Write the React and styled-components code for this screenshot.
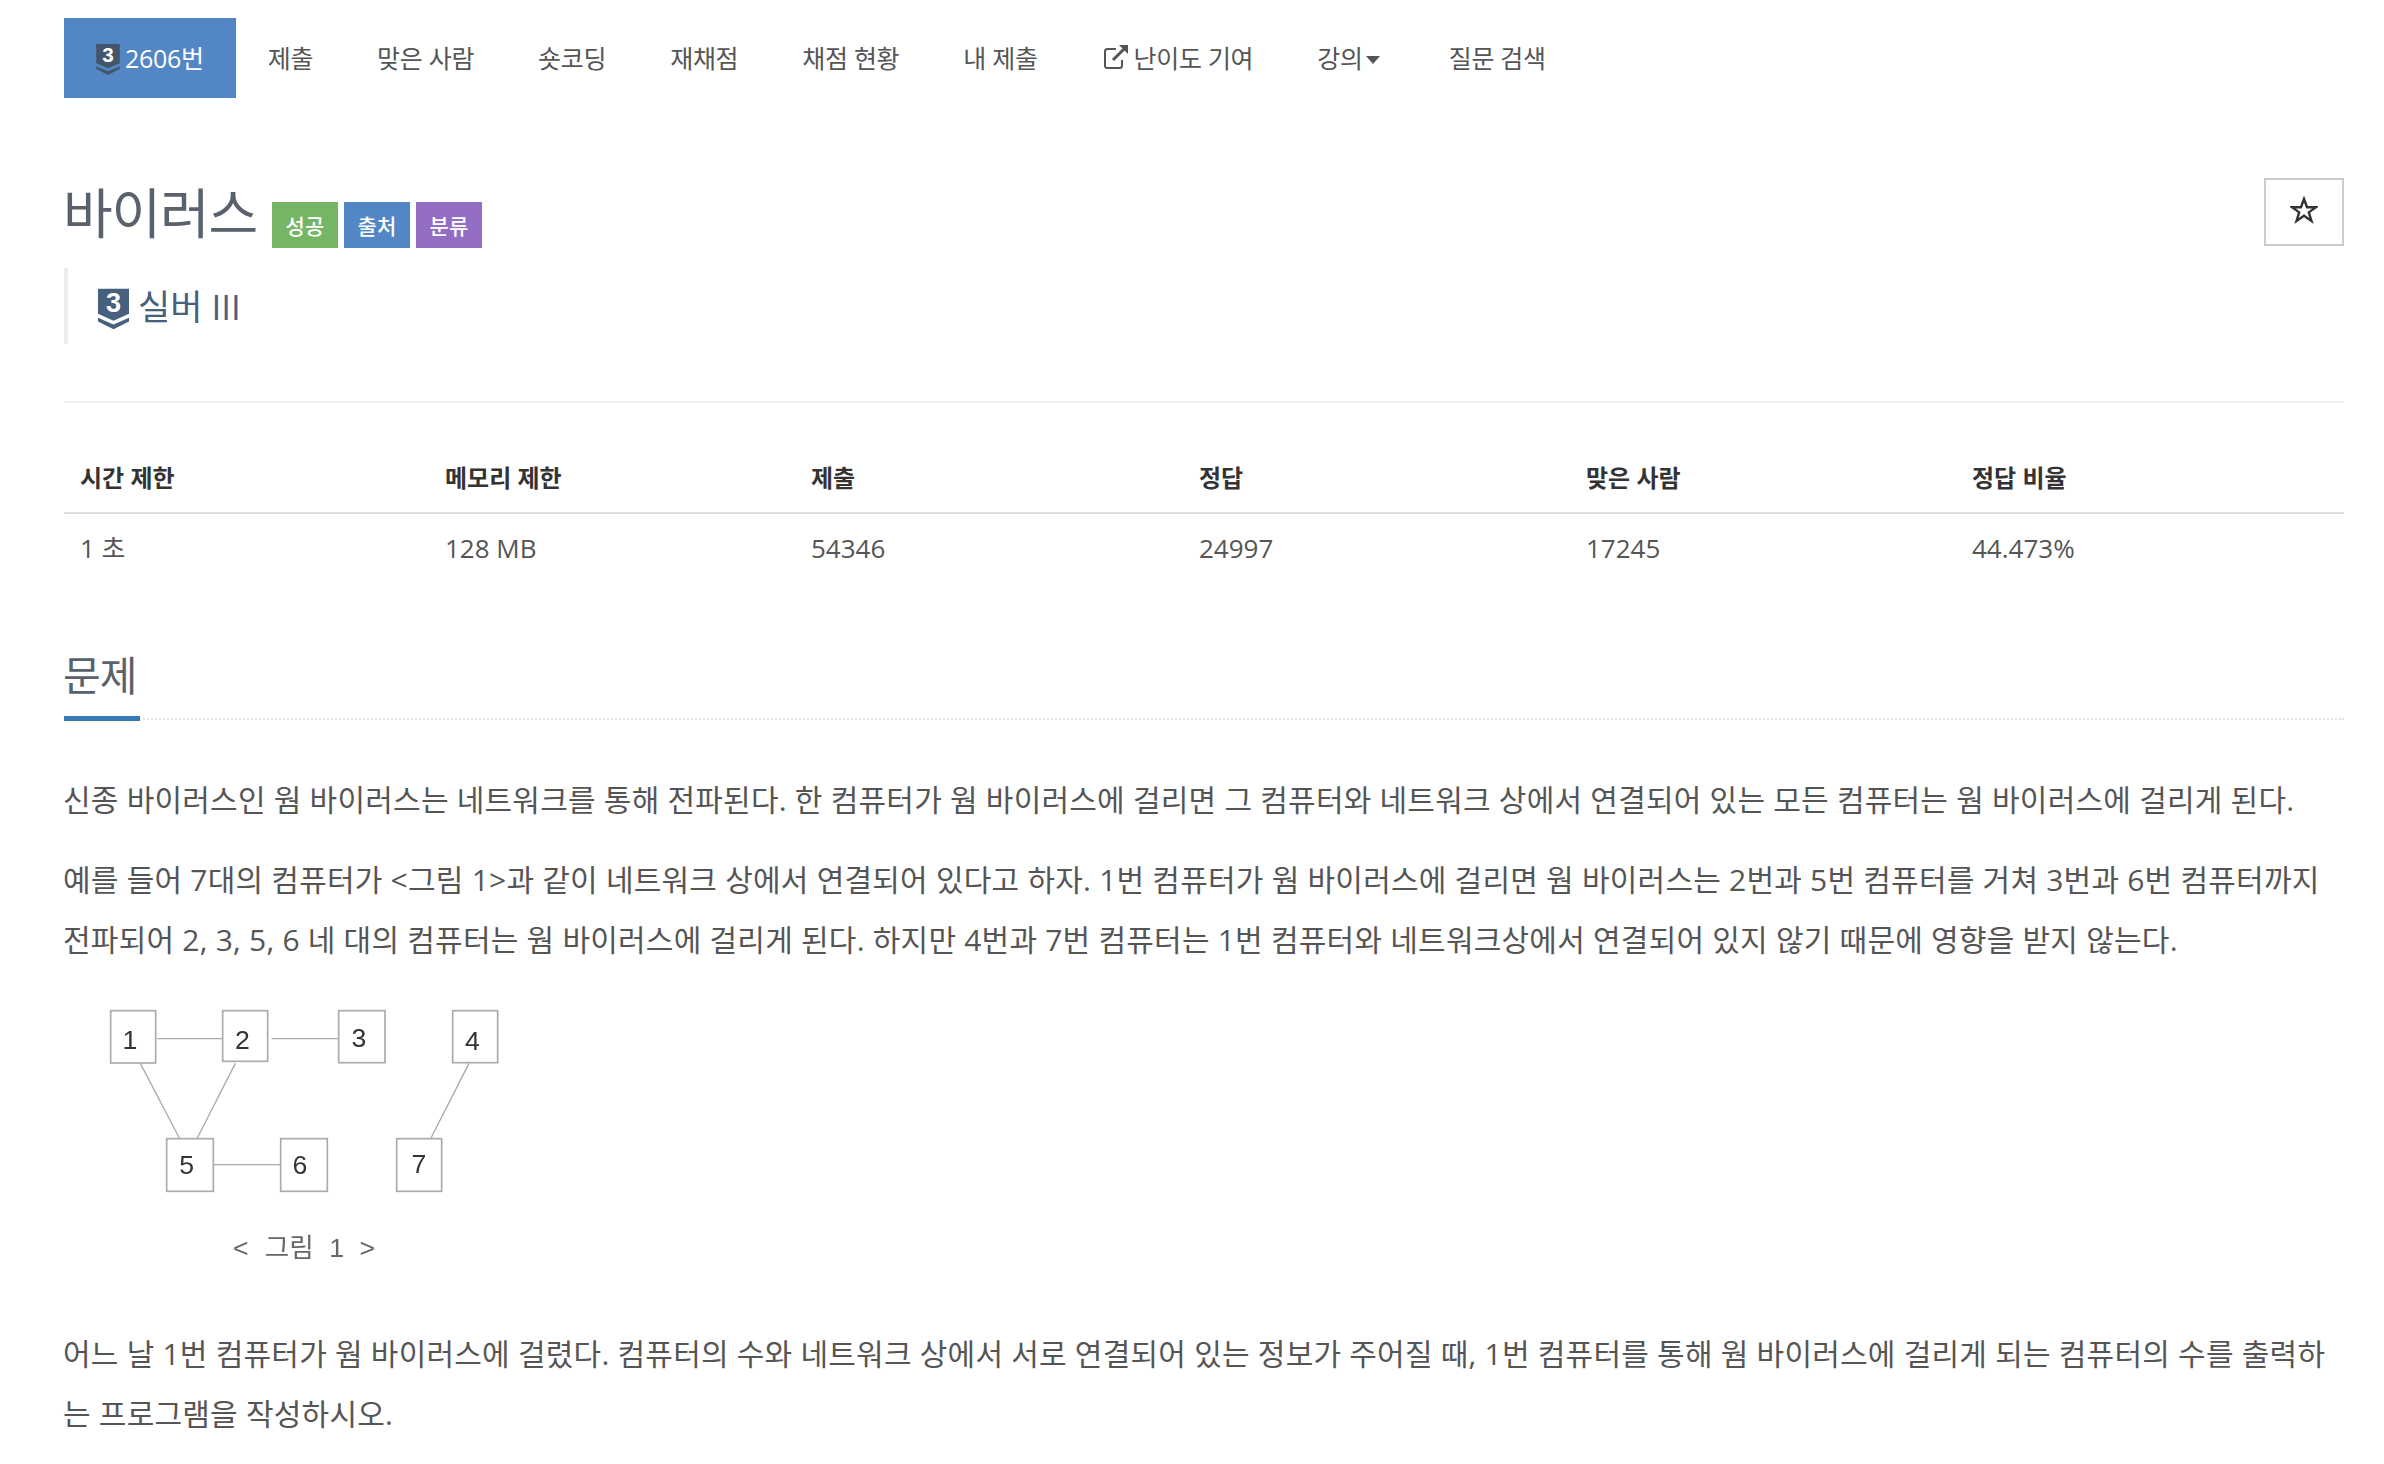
import React from "react";
import styled, { createGlobalStyle } from "styled-components";

const GlobalStyle = createGlobalStyle`
  html, body {
    margin: 0;
    padding: 0;
    background: #fff;
    overflow: hidden;
  }
  body {
    font-family: "Open Sans", "Noto Sans CJK KR", sans-serif;
    color: #555;
  }
`;

const Page = styled.div`
  width: 2384px;
  height: 1464px;
  box-sizing: border-box;
  padding: 18px 40px 0 64px;
  overflow: hidden;
`;

const NavBar = styled.nav`
  display: flex;
  align-items: stretch;
  height: 80px;
`;

const NavItem = styled.a`
  display: flex;
  align-items: center;
  padding: 0 32px 2px;
  font-size: 25px;
  letter-spacing: -0.3px;
  color: ${(props) => (props.$active ? "#fff" : "#555")};
  background: ${(props) => (props.$active ? "#5286c4" : "transparent")};
  white-space: nowrap;
`;

const NavIcon = styled.span`
  display: flex;
  margin-top: ${(props) => props.$top || 0}px;
  margin-right: ${(props) => props.$gap}px;
`;

const Caret = styled.span`
  width: 0;
  height: 0;
  margin: 6px 5px 0 3px;
  border-left: 7px solid transparent;
  border-right: 7px solid transparent;
  border-top: 8px solid #555;
`;

const TitleRow = styled.div`
  display: flex;
  align-items: flex-start;
  justify-content: space-between;
  margin-top: 80px;
`;

const TitleGroup = styled.div`
  display: flex;
  align-items: flex-end;
`;

const Title = styled.h1`
  margin: 0 15px 0 -1px;
  font-size: 54px;
  line-height: 70px;
  font-weight: 400;
  color: #59616c;
  letter-spacing: -1.2px;
`;

const Labels = styled.div`
  display: flex;
  gap: 6px;
`;

const Label = styled.span`
  display: flex;
  align-items: center;
  justify-content: center;
  width: 66px;
  height: 46px;
  font-size: 21px;
  font-weight: 500;
  color: #fff;
  background: ${(props) => props.$color};
`;

const StarButton = styled.button`
  display: flex;
  align-items: center;
  justify-content: center;
  width: 80px;
  height: 68px;
  padding: 0 0 4px;
  background: #fff;
  border: 2px solid #ccc;
`;

const TierQuote = styled.div`
  display: flex;
  align-items: center;
  height: 76px;
  margin: 20px 0 0;
  padding-left: 30px;
  border-left: 4px solid #eee;
`;

const TierIcon = styled.span`
  display: flex;
  margin-top: 6px;
`;

const TierName = styled.span`
  margin: 0 0 3px 9px;
  font-size: 35px;
  color: #46607e;
`;

const Divider = styled.hr`
  margin: 57px 0 0;
  border: 0;
  border-top: 2px solid #f0f0f0;
`;

const StatsTable = styled.div`
  display: grid;
  grid-template-columns: 365px 366px 388px 387px 386px 1fr;
  margin-top: 24px;
`;

const HeadCell = styled.div`
  height: 87px;
  box-sizing: border-box;
  padding: 35px 16px 0;
  font-size: 24px;
  line-height: 32px;
  font-weight: 700;
  color: #333;
  border-bottom: 2px solid #ddd;
`;

const BodyCell = styled.div`
  padding: 17px 16px 0;
  font-size: 26px;
  line-height: 34px;
  color: #555;
`;

const SectionHead = styled.div`
  position: relative;
  height: 75px;
  margin-top: 78px;
  border-bottom: 2px dotted #e4e4e4;
`;

const SectionTitle = styled.h2`
  margin: 0 0 0 -1px;
  font-size: 41px;
  line-height: 64px;
  font-weight: 400;
  color: #59616c;
  letter-spacing: -1px;
`;

const SectionBar = styled.span`
  position: absolute;
  left: 0;
  bottom: -3px;
  width: 76px;
  height: 5px;
  background: #337ab7;
`;

const Body = styled.div`
  margin-top: 50px;
`;

const Para = styled.p`
  margin: 0 0 ${(props) => props.$after || 20}px -1px;
  font-size: 30px;
  line-height: 60px;
  color: #555;
  letter-spacing: 0.22px;
`;

const Figure = styled.svg`
  display: block;
  margin: 0 0 44px 16px;
  filter: blur(0.5px);
`;

const Shield = ({ width, height, color, digit }) => (
  <svg width={width} height={height} viewBox="0 0 32 42">
    <path d="M0 0H32V26L16 33L0 26Z" fill={color} />
    <path d="M0 30L16 37L32 30V34L16 42L0 34Z" fill={color} />
    <text x="16" y="24" textAnchor="middle" fontFamily="'Liberation Sans', sans-serif" fontSize="28" fontWeight="700" fill="#fff">{digit}</text>
  </svg>
);

const boxes = [
  { x: 92, y: 62, w: 135, h: 157, n: "1", tx: 150, ty: 178 },
  { x: 428, y: 62, w: 135, h: 152, n: "2", tx: 487, ty: 176 },
  { x: 776, y: 62, w: 139, h: 156, n: "3", tx: 837, ty: 171 },
  { x: 1118, y: 62, w: 135, h: 156, n: "4", tx: 1177, ty: 180 },
  { x: 260, y: 446, w: 140, h: 158, n: "5", tx: 320, ty: 553 },
  { x: 602, y: 446, w: 140, h: 158, n: "6", tx: 660, ty: 553 },
  { x: 950, y: 446, w: 135, h: 158, n: "7", tx: 1017, ty: 550 },
];

const links = [
  [232, 146, 428, 146],
  [575, 146, 776, 146],
  [181, 220, 298, 444],
  [466, 220, 352, 444],
  [1167, 220, 1050, 450],
  [400, 524, 602, 524],
];

const caption = [
  { x: 482, t: "<" },
  { x: 628, t: "그림" },
  { x: 770, t: "1" },
  { x: 862, t: ">" },
];

const GraphFigure = () => (
  <Figure width="460" height="290" viewBox="0 0 1380 870">
    {links.map(([x1, y1, x2, y2], i) => (
      <line key={i} x1={x1} y1={y1} x2={x2} y2={y2} stroke="#aaa" strokeWidth="4" />
    ))}
    {boxes.map((b) => (
      <g key={b.n}>
        <rect x={b.x} y={b.y} width={b.w} height={b.h} fill="#fff" stroke="#aaa" strokeWidth="5" />
        <text x={b.tx} y={b.ty} textAnchor="middle" fontFamily="'Liberation Sans', sans-serif" fontSize="80" fill="#333">{b.n}</text>
      </g>
    ))}
    {caption.map((c) => (
      <text key={c.x} x={c.x} y="800" textAnchor="middle" fontFamily="'Liberation Sans', 'Noto Sans CJK KR', sans-serif" fontSize="80" fill="#666">{c.t}</text>
    ))}
  </Figure>
);

const navItems = ["제출", "맞은 사람", "숏코딩", "재채점", "채점 현황", "내 제출"];
const stats = [
  ["시간 제한", "1 초"],
  ["메모리 제한", "128 MB"],
  ["제출", "54346"],
  ["정답", "24997"],
  ["맞은 사람", "17245"],
  ["정답 비율", "44.473%"],
];

const App = () => {
  return (
    <Page>
      <GlobalStyle />
      <NavBar>
        <NavItem $active>
          <NavIcon $gap={5} $top={4}>
            <Shield width={24} height={31} color="#44566c" digit="3" />
          </NavIcon>
          2606번
        </NavItem>
        {navItems.map((item) => (
          <NavItem key={item}>{item}</NavItem>
        ))}
        <NavItem>
          <NavIcon $gap={4}>
            <svg width="28" height="28" viewBox="0 0 28 28" fill="none" stroke="#555" strokeWidth="2">
              <path d="M14 6H5.5A2.5 2.5 0 0 0 3 8.500V22.500A2.500 2.500 0 0 0 5.500 25H17.500A2.500 2.500 0 0 0 20 22.500V17" />
              <path d="M11 17L22 6" strokeWidth="3" />
              <path d="M17 2H26V11Z" fill="#555" stroke="none" />
            </svg>
          </NavIcon>
          난이도 기여
        </NavItem>
        <NavItem>
          강의
          <Caret />
        </NavItem>
        <NavItem>질문 검색</NavItem>
      </NavBar>

      <TitleRow>
        <TitleGroup>
          <Title>바이러스</Title>
          <Labels>
            <Label $color="#75b666">성공</Label>
            <Label $color="#5286c4">출처</Label>
            <Label $color="#936dc4">분류</Label>
          </Labels>
        </TitleGroup>
        <StarButton aria-label="star">
          <svg width="28" height="28" viewBox="0 0 28 28">
            <path d="M14 3L17 11.200H26L18.800 16.400L21.500 25L14 19.800L6.500 25L9.200 16.400L2 11.200H11Z" fill="none" stroke="#333" strokeWidth="2.4" />
          </svg>
        </StarButton>
      </TitleRow>

      <TierQuote>
        <TierIcon>
          <Shield width={31} height={42} color="#46607e" digit="3" />
        </TierIcon>
        <TierName>실버 III</TierName>
      </TierQuote>

      <Divider />

      <StatsTable>
        {stats.map(([head]) => (
          <HeadCell key={head}>{head}</HeadCell>
        ))}
        {stats.map(([head, value]) => (
          <BodyCell key={head}>{value}</BodyCell>
        ))}
      </StatsTable>

      <SectionHead>
        <SectionTitle>문제</SectionTitle>
        <SectionBar />
      </SectionHead>

      <Body>
        <Para>신종 바이러스인 웜 바이러스는 네트워크를 통해 전파된다. 한 컴퓨터가 웜 바이러스에 걸리면 그 컴퓨터와 네트워크 상에서 연결되어 있는 모든 컴퓨터는 웜 바이러스에 걸리게 된다.</Para>
        <Para $after={20}>예를 들어 7대의 컴퓨터가 &lt;그림 1&gt;과 같이 네트워크 상에서 연결되어 있다고 하자. 1번 컴퓨터가 웜 바이러스에 걸리면 웜 바이러스는 2번과 5번 컴퓨터를 거쳐 3번과 6번 컴퓨터까지 전파되어 2, 3, 5, 6 네 대의 컴퓨터는 웜 바이러스에 걸리게 된다. 하지만 4번과 7번 컴퓨터는 1번 컴퓨터와 네트워크상에서 연결되어 있지 않기 때문에 영향을 받지 않는다.</Para>
        <GraphFigure />
        <Para>어느 날 1번 컴퓨터가 웜 바이러스에 걸렸다. 컴퓨터의 수와 네트워크 상에서 서로 연결되어 있는 정보가 주어질 때, 1번 컴퓨터를 통해 웜 바이러스에 걸리게 되는 컴퓨터의 수를 출력하는 프로그램을 작성하시오.</Para>
      </Body>
    </Page>
  );
};

export default App;
